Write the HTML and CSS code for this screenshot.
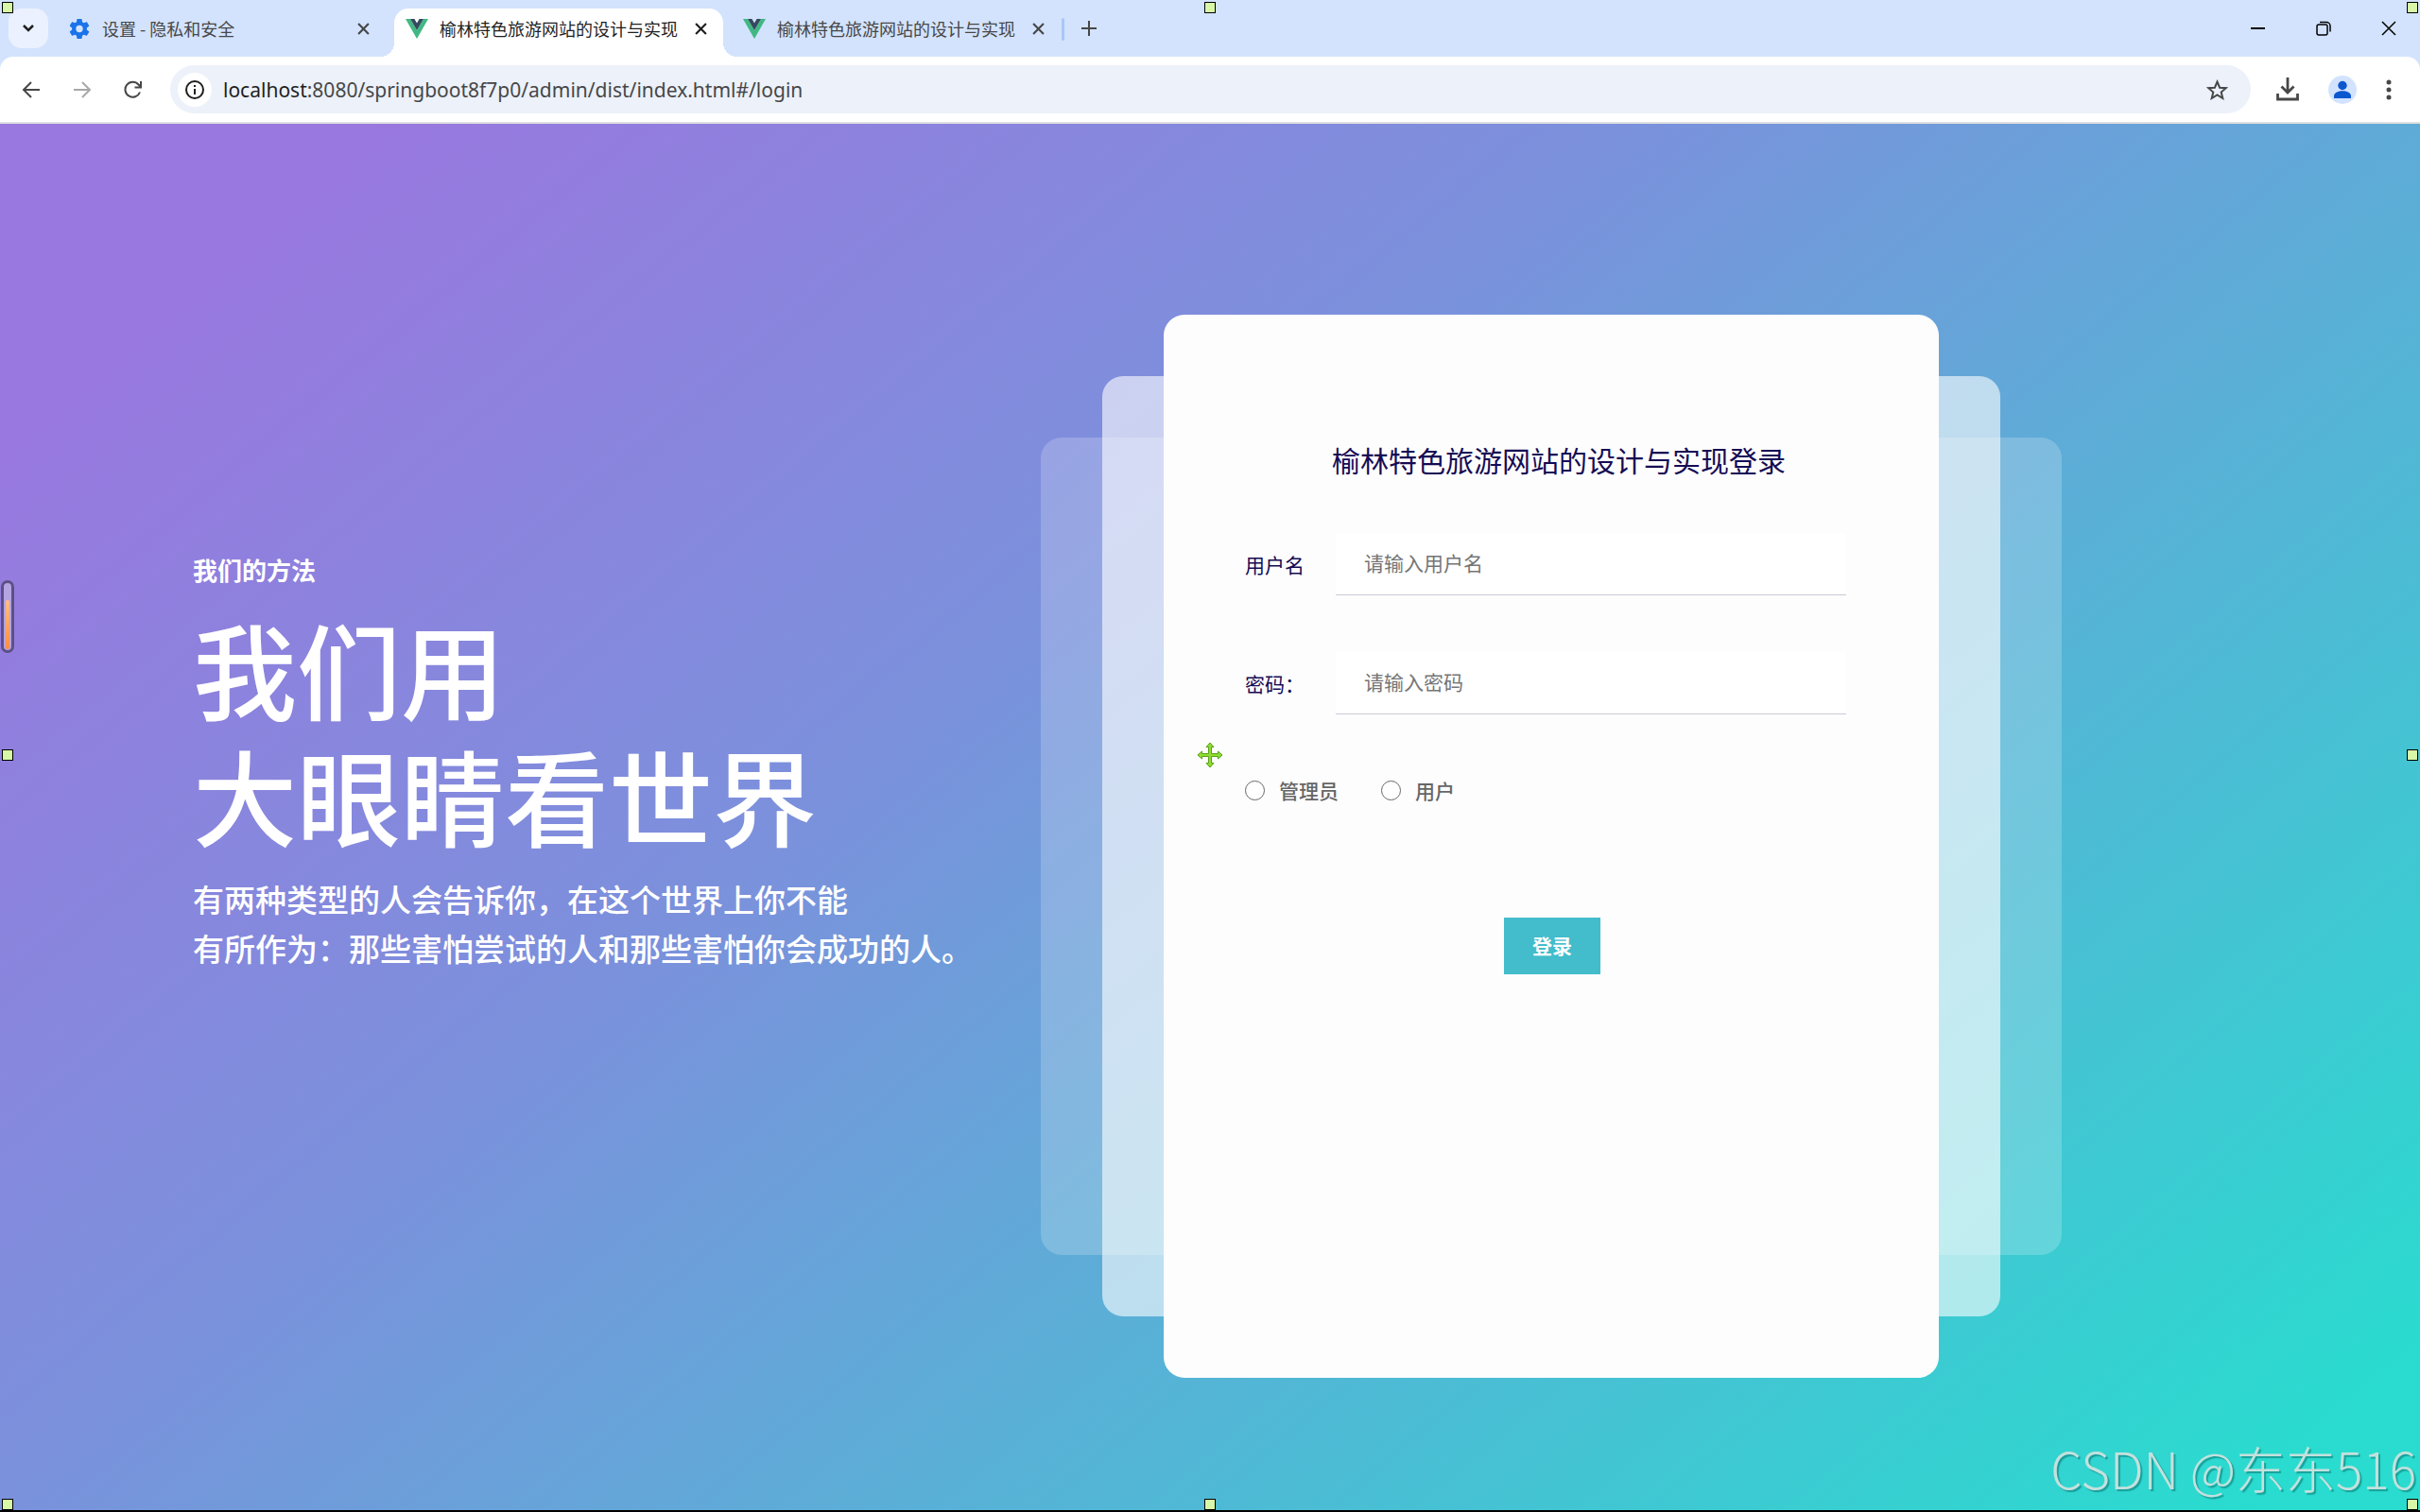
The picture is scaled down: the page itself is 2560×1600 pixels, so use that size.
FILE: index.html
```html
<!DOCTYPE html>
<html lang="zh-CN">
<head>
<meta charset="utf-8">
<title>榆林特色旅游网站的设计与实现</title>
<link rel="stylesheet" href="styles.css">
</head>
<body>
<svg class="defs" width="0" height="0" aria-hidden="true">
  <symbol id="vue" viewBox="0 0 24 21"><path fill="#41b883" d="M0 0h5l7 12L19 0h5L12 21z"/><path fill="#35495e" d="M5 0h4.400l2.600 4.500L14.600 0H19l-7 12z"/></symbol>
  <symbol id="close" viewBox="0 0 12 12"><path d="M1 1l10 10M11 1L1 11" fill="none" stroke="currentColor" stroke-width="2"/></symbol>
</svg>

<header class="browser">
  <div class="tabstrip">
    <button class="tab-search" aria-label="搜索标签页"><svg width="14" height="10" viewBox="0 0 14 10"><path d="M2 2l5 5 5-5" fill="none" stroke="#1f1f1f" stroke-width="2.500"/></svg></button>
    <div class="tab">
      <svg class="favicon" viewBox="2 2 20 20"><path fill="#1a73e8" d="M19.430 12.980c.04-.32.070-.64.070-.98s-.03-.66-.070-.98l2.110-1.650c.19-.15.240-.42.120-.64l-2-3.460c-.12-.22-.39-.3-.61-.22l-2.490 1c-.52-.4-1.080-.73-1.690-.98l-.38-2.650A.49.490 0 0 0 14 2h-4c-.25 0-.46.180-.49.420l-.38 2.650c-.61.250-1.170.590-1.690.980l-2.490-1c-.23-.09-.49 0-.61.220l-2 3.460c-.13.220-.07.490.12.640l2.110 1.650c-.04.320-.07.650-.07.980s.03.660.070.980l-2.110 1.650c-.19.150-.24.420-.12.640l2 3.460c.12.220.390.300.610.220l2.490-1c.52.400 1.080.730 1.690.980l.38 2.650c.03.240.240.420.490.420h4c.25 0 .46-.18.490-.42l.38-2.650c.61-.25 1.170-.59 1.690-.98l2.490 1c.23.090.490 0 .61-.22l2-3.460c.12-.22.070-.49-.12-.64zM12 15.500a3.500 3.500 0 1 1 0-7 3.500 3.500 0 0 1 0 7z"/></svg>
      <span class="tab-title">设置 - 隐私和安全</span>
      <button class="tab-close" aria-label="关闭"><svg width="13" height="13"><use href="#close"/></svg></button>
    </div>
    <div class="tab tab-active">
      <svg class="favicon" viewBox="0 0 24 21"><use href="#vue"/></svg>
      <span class="tab-title">榆林特色旅游网站的设计与实现</span>
      <button class="tab-close" aria-label="关闭"><svg width="13" height="13"><use href="#close"/></svg></button>
    </div>
    <div class="tab">
      <svg class="favicon" viewBox="0 0 24 21"><use href="#vue"/></svg>
      <span class="tab-title">榆林特色旅游网站的设计与实现</span>
      <button class="tab-close" aria-label="关闭"><svg width="13" height="13"><use href="#close"/></svg></button>
    </div>
    <span class="tab-divider"></span>
    <button class="new-tab" aria-label="新标签页"><svg width="16" height="16" viewBox="0 0 16 16"><path d="M8 0v16M0 8h16" stroke="#474747" stroke-width="2"/></svg></button>
    <div class="window-buttons">
      <button aria-label="最小化"><svg width="16" height="16" viewBox="0 0 16 16"><path d="M0 8h15" stroke="#000" stroke-width="2"/></svg></button>
      <button aria-label="还原"><svg width="16" height="16" viewBox="0 0 16 16" fill="none" stroke="#000" stroke-width="1.500"><rect x="1" y="4" width="11" height="11" rx="2"/><path d="M4 1.500h7a4 4 0 0 1 4 4v6"/></svg></button>
      <button aria-label="关闭"><svg width="16" height="16" viewBox="0 0 16 16"><path d="M1 1l14 14M15 1L1 15" stroke="#000" stroke-width="1.500"/></svg></button>
    </div>
  </div>
  <div class="toolbar">
    <button class="nav" aria-label="后退"><svg width="20" height="20" viewBox="0 0 20 20"><path d="M10 2L2 10l8 8M2 10h17" fill="none" stroke="#474747" stroke-width="2"/></svg></button>
    <button class="nav" aria-label="前进"><svg width="20" height="20" viewBox="0 0 20 20"><path d="M10 2l8 8-8 8M18 10H1" fill="none" stroke="#a8a8a8" stroke-width="2"/></svg></button>
    <button class="nav" aria-label="重新加载"><svg width="20" height="20" viewBox="0 0 20 20"><path d="M17 12.500A8 8 0 1 1 15.500 4.500L18 7M18 1v6.500h-6.500" fill="none" stroke="#474747" stroke-width="2"/></svg></button>
    <div class="omnibox">
      <button class="site-info" aria-label="网站信息"><svg width="20" height="20" viewBox="0 0 20 20"><circle cx="10" cy="10" r="9" fill="none" stroke="#1f1f1f" stroke-width="2"/><path d="M10 9v6M10 5v2" stroke="#1f1f1f" stroke-width="2"/></svg></button>
      <a class="url" href="#/login"><span class="host">localhost</span>:8080/springboot8f7p0/admin/dist/index.html#/login</a>
      <button class="star" aria-label="收藏"><svg width="23" height="22" viewBox="0 0 23 22"><path d="M11.500 2.500l2.600 6.200 6.600.5-5 4.300 1.600 6.500-5.800-3.500L5.700 20l1.600-6.500-5-4.300 6.600-.5z" fill="none" stroke="#474747" stroke-width="2"/></svg></button>
    </div>
    <div class="actions">
      <button aria-label="下载"><svg width="24" height="25" viewBox="0 0 24 25"><path d="M12 0v15M5.500 9.500l6.500 6.500 6.500-6.500M1.500 17v6h21v-6" fill="none" stroke="#474747" stroke-width="2.800"/></svg></button>
      <button aria-label="个人资料"><svg width="30" height="30" viewBox="0 0 30 30"><circle cx="15" cy="15" r="15" fill="#d3e3fd"/><circle cx="15" cy="10.500" r="4.700" fill="#0b57d0"/><path d="M6 24v-2.500c0-3.500 5-5.200 9-5.200s9 1.700 9 5.200V24z" fill="#0b57d0"/></svg></button>
      <button aria-label="菜单"><svg width="6" height="22" viewBox="0 0 6 22" fill="#474747"><circle cx="3" cy="3" r="2.500"/><circle cx="3" cy="11" r="2.500"/><circle cx="3" cy="19" r="2.500"/></svg></button>
    </div>
  </div>
</header>

<main class="page">
  <section class="intro">
    <p class="eyebrow">我们的方法</p>
    <h1>我们用<br>大眼睛看世界</h1>
    <p class="lead">有两种类型的人会告诉你，在这个世界上你不能<br>有所作为：那些害怕尝试的人和那些害怕你会成功的人。</p>
  </section>
  <div class="stack">
    <div class="layer layer-back"></div>
    <div class="layer layer-mid"></div>
    <form class="card">
      <h2>榆林特色旅游网站的设计与实现登录</h2>
      <div class="field"><label for="user">用户名</label><input id="user" type="text" placeholder="请输入用户名"></div>
      <div class="field"><label for="pass">密码：</label><input id="pass" type="password" placeholder="请输入密码"></div>
      <div class="roles">
        <label><input type="radio" name="role">管理员</label>
        <label><input type="radio" name="role">用户</label>
      </div>
      <button class="submit" type="button">登录</button>
    </form>
  </div>
</main>

<div class="meter"><span></span></div>
<svg class="move" viewBox="0 0 28 28"><path d="M14 1l4 4.500H15.500v7h7V10L27 14l-4.500 4V15.500h-7v7H18L14 27l-4-4.500H12.500v-7h-7V18L1 14l4.500-4V12.500h7v-7H10z" fill="#8fdc30" stroke="#5aa01c" stroke-width="1"/></svg>
<i class="handle top left"></i><i class="handle top center"></i><i class="handle top right"></i>
<i class="handle middle left"></i><i class="handle middle right"></i>
<i class="handle bottom left"></i><i class="handle bottom center"></i><i class="handle bottom right"></i>
<div class="watermark">CSDN @东东516</div>
</body>
</html>
```
FILE: styles.css
```css
* { box-sizing: border-box; }
body {
  margin: 0;
  min-height: 100vh;
  display: flex;
  flex-direction: column;
  position: relative;
  border-bottom: 2px solid #000;
  font-family: "Noto Sans CJK SC", sans-serif;
  font-size: 21px;
}
button {
  display: flex;
  align-items: center;
  justify-content: center;
  padding: 0;
  border: 0;
  background: none;
  color: inherit;
  font: inherit;
}
svg { display: block; flex: none; }
h1, h2, p { margin: 0; font-weight: 400; }
.defs { position: absolute; }

/* Browser frame */
.browser { background: #d3e3fd; border-bottom: 2px solid #e0e0e0; }
.tabstrip {
  display: flex;
  align-items: flex-start;
  height: 60px;
  padding: 9px 16px 0 9px;
  color: #474747;
  font-size: 18px;
}
.tab-search { width: 42px; height: 42px; border-radius: 14px; background: #ebf1fe; }
.tab {
  display: flex;
  align-items: center;
  width: 357px;
  height: 42px;
  padding: 0 12px 0 21px;
}
.tab-active {
  position: relative;
  width: 348px;
  height: 51px;
  margin-left: 9px;
  padding: 0 12px 9px 12px;
  border-radius: 15px 15px 0 0;
  background: #fff;
  color: #1f1f1f;
}
.tab-active::before,
.tab-active::after {
  content: "";
  position: absolute;
  bottom: 0;
  width: 15px;
  height: 15px;
}
.tab-active::before { right: 100%; background: radial-gradient(circle at 0 0, transparent 15px, #fff 15px); }
.tab-active::after { left: 100%; background: radial-gradient(circle at 100% 0, transparent 15px, #fff 15px); }
.favicon { width: 24px; height: 21px; margin-right: 12px; }
.tab-title { flex: 1; white-space: nowrap; }
.tab-close { width: 24px; height: 24px; }
.tab-divider { width: 3px; height: 24px; margin: 10px 18px 0 1px; border-radius: 2px; background: #a8c7fa; }
.new-tab { width: 16px; height: 42px; }
.window-buttons { display: flex; gap: 35px; margin-left: auto; }
.window-buttons button { width: 34px; height: 42px; }

.toolbar {
  display: flex;
  align-items: center;
  height: 69px;
  padding: 0 24px 0 6px;
  border-radius: 14px 14px 0 0;
  background: #fff;
}
.nav { width: 54px; height: 51px; }
.omnibox {
  display: flex;
  flex: 1;
  align-items: center;
  height: 51px;
  margin-left: 12px;
  padding: 0 24px 0 8px;
  border-radius: 26px;
  background: #ecf1fa;
}
.site-info { width: 36px; height: 36px; border-radius: 50%; background: #fff; }
.url { flex: 1; margin-left: 12px; color: #474747; font-family: "Noto Sans", sans-serif; font-size: 21px; text-decoration: none; }
.host { color: #1f1f1f; }
.actions { display: flex; align-items: center; gap: 31px; margin-left: 27px; padding-right: 6px; }

/* Login page */
.page {
  flex: 1;
  display: grid;
  grid-template-columns: 1101fr 1080fr 379fr;
  align-items: start;
  padding: 202px 0 140px;
  background: linear-gradient(140deg, #9978df 9%, #7b91dc 40%, #29dccf 96%);
}
.intro { padding: 250px 0 0 204px; color: #fff; white-space: nowrap; }
.eyebrow { font-size: 26px; font-weight: 700; line-height: 40px; }
h1 { margin-top: 16px; font-size: 110px; font-weight: 500; line-height: 134px; }
.lead { margin-top: 18px; font-size: 33px; font-weight: 500; line-height: 52px; }

.stack { display: grid; align-self: stretch; }
.stack > * { grid-area: 1 / 1; border-radius: 22px; }
.layer-back { margin: 130px 0; background: rgba(255, 255, 255, .2); }
.layer-mid { margin: 65px; background: rgba(255, 255, 255, .6); }
.card {
  display: flex;
  flex-direction: column;
  min-height: 1125px;
  margin: 0 130px;
  padding: 130px 98px 0 86px;
  background: #fdfdfd;
  color: #150b54;
}
.card h2 { padding-left: 28px; font-size: 30px; line-height: 46px; text-align: center; }
.field { display: flex; align-items: center; height: 66px; margin-top: 60px; }
.card h2 + .field { margin-top: 55px; }
.field label { width: 96px; }
.field input {
  flex: 1;
  min-width: 0;
  height: 66px;
  padding: 0 30px 4px;
  border: 0;
  border-bottom: 1px solid #c9c9d6;
  background: #fff;
  font: inherit;
}
.field input::placeholder { color: #757575; opacity: 1; }
.roles { display: flex; gap: 45px; margin-top: 64px; color: #666; font-weight: 500; line-height: 32px; }
.roles label { display: flex; align-items: center; }
.roles input {
  appearance: none;
  width: 21px;
  height: 21px;
  margin: 0 15px 0 0;
  border: 1px solid #666;
  border-radius: 50%;
  background: #fff;
}
.submit {
  align-self: center;
  width: 102px;
  height: 60px;
  margin: 119px 0 0 14px;
  padding-bottom: 2px;
  background: #43bccb;
  color: #fff;
  font-weight: 700;
}

/* Screen overlay marks */
.handle { position: absolute; width: 12px; height: 12px; border: 1px solid #000; background: #d8f8a8; }
.top { top: 2px; }
.middle { top: calc(50% - 6px); }
.bottom { bottom: 0; }
.left { left: 2px; }
.center { left: calc(50% - 6px); }
.right { right: 2px; }
.meter {
  position: absolute;
  left: 1px;
  top: 614px;
  display: flex;
  align-items: flex-end;
  justify-content: center;
  width: 14px;
  height: 77px;
  padding-bottom: 1px;
  border: 3px solid #5c5184;
  border-radius: 7px;
  background: #b5a3e2;
}
.meter span { width: 4px; height: 52px; border-radius: 2px; background: linear-gradient(#ffbe86, #ff8c42); }
.move { position: absolute; left: calc(50% - 14px); top: calc(50% - 14px); width: 28px; height: 28px; }
.watermark {
  position: absolute;
  right: 4px;
  bottom: 5px;
  color: #c3e1dd;
  font-size: 53px;
  font-weight: 300;
  line-height: 80px;
  text-shadow: 2px 2px 1px rgba(0, 90, 90, .45);
}
```
